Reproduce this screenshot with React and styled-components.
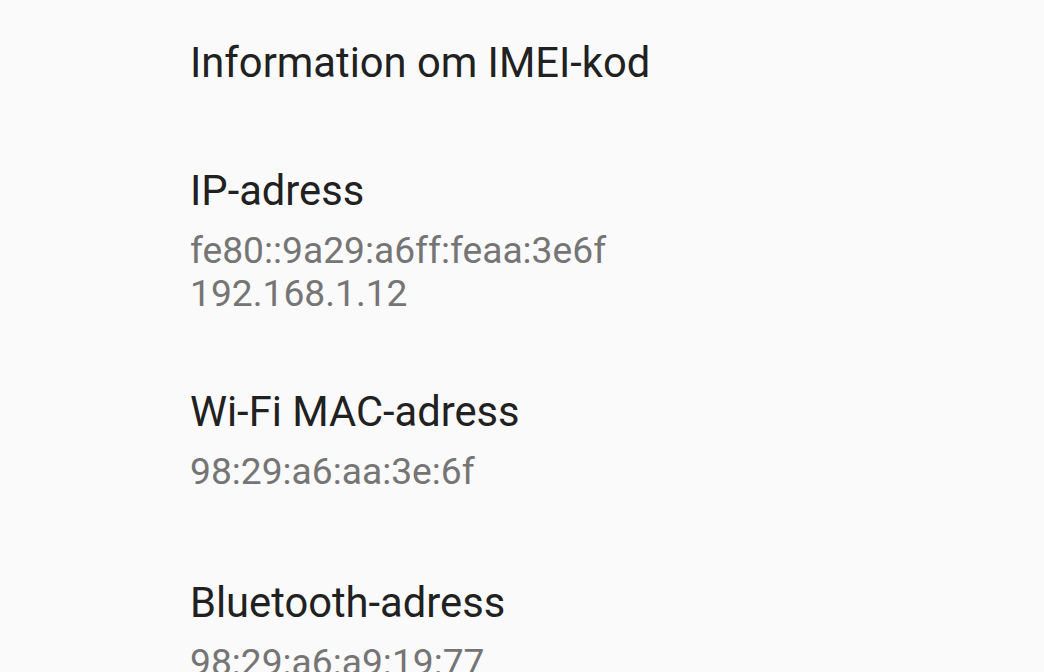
import React from "react";
import styled, { createGlobalStyle } from "styled-components";

const Global = createGlobalStyle`
  html, body { margin: 0; padding: 0; background: #fafafa; }
  body { font-family: Roboto, "Noto Sans", sans-serif; }
`;

const Page = styled.div`
  width: 1044px;
  height: 672px;
  overflow: hidden;
  background: #fafafa;
  display: flex;
  flex-direction: column;
`;

const Item = styled.div`
  box-sizing: border-box;
  min-height: ${(p) => (p.$first ? "0" : "191px")};
  padding: ${(p) => (p.$first ? "39px 0 43px 190px" : "37px 0 36px 190px")};
  display: flex;
  flex-direction: column;
  flex-shrink: 0;
`;

const Title = styled.div`
  font-size: 41.7px;
  line-height: 48px;
  color: #212121;
  white-space: nowrap;
`;

const Values = styled.div`
  margin-top: 14px;
  display: flex;
  flex-direction: column;
`;

const Value = styled.div`
  font-size: 37.2px;
  line-height: 43px;
  color: #757575;
  white-space: nowrap;
`;

const items = [
  { title: "Information om IMEI-kod", values: [] },
  { title: "IP-adress", values: ["fe80::9a29:a6ff:feaa:3e6f", "192.168.1.12"] },
  { title: "Wi-Fi MAC-adress", values: ["98:29:a6:aa:3e:6f"] },
  { title: "Bluetooth-adress", values: ["98:29:a6:a9:19:77"] },
];

export default function App() {
  return (
    <Page>
      <Global />
      {items.map((it, i) => (
        <Item key={it.title} $first={i === 0}>
          <Title>{it.title}</Title>
          {it.values.length > 0 && (
            <Values>
              {it.values.map((v) => (
                <Value key={v}>{v}</Value>
              ))}
            </Values>
          )}
        </Item>
      ))}
    </Page>
  );
}
